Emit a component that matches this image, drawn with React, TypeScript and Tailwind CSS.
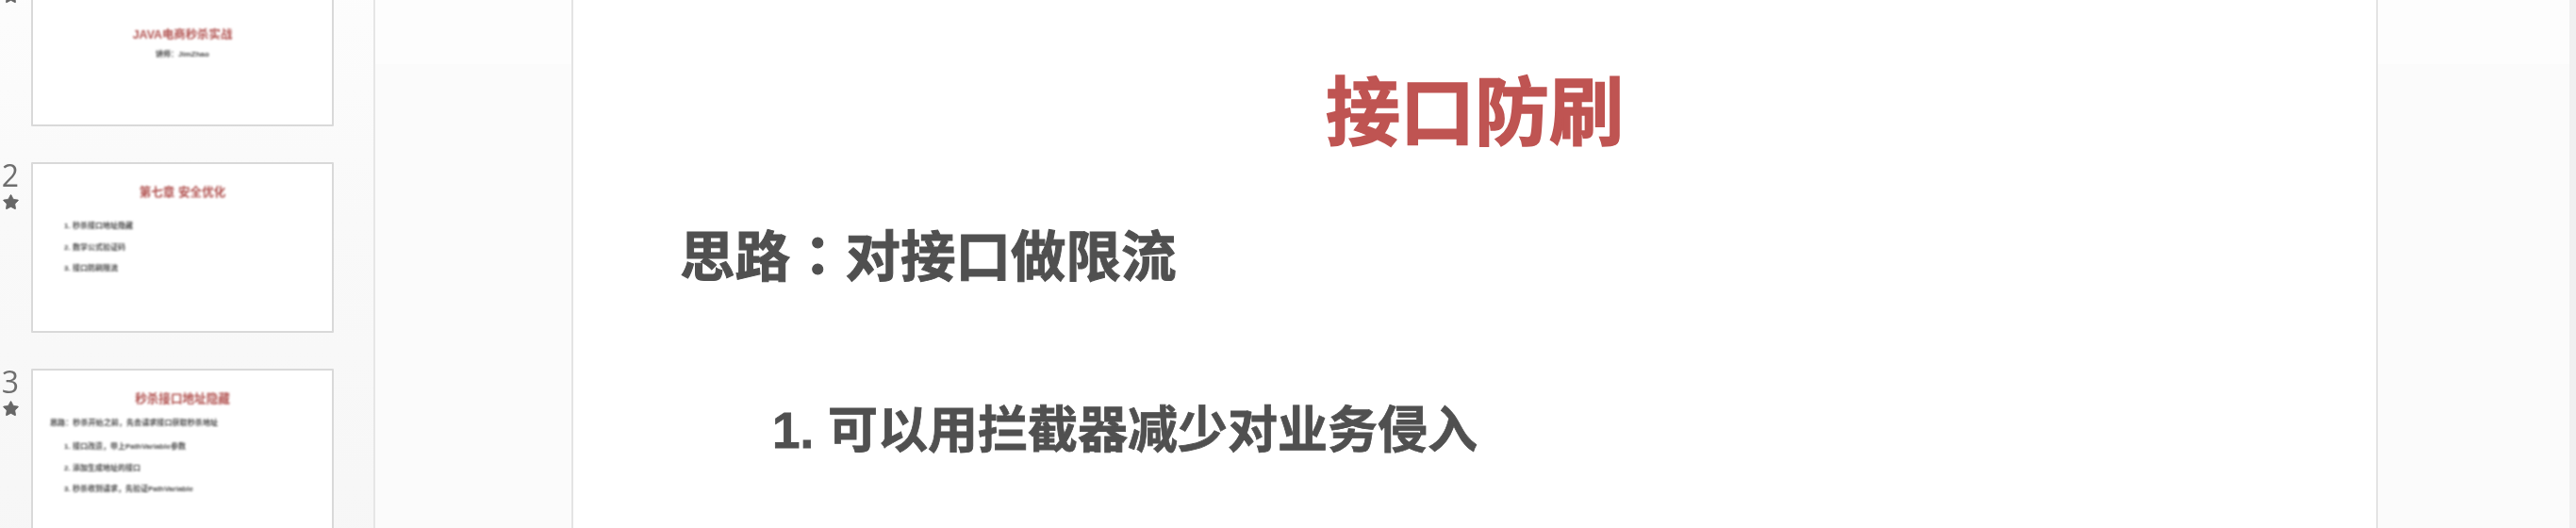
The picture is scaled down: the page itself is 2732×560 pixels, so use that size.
import { Star } from "lucide-react"

const cjk = "font-['Liberation_Sans','Noto_Sans_CJK_SC',sans-serif]"

interface ThumbProps {
  num?: number
  children: React.ReactNode
}

function Thumb({ num, children }: ThumbProps) {
  return (
    <div className="flex h-[181px] shrink-0">
      <div className="flex w-[33px] shrink-0 flex-col items-center pr-[11px]">
        <span className="mt-[-8px] h-[44px] font-['Open_Sans',sans-serif] text-[32px] leading-[44px] text-[#6e6e6e] blur-[0.5px]">
          {num}
        </span>
        <Star className="mt-[-3px] h-[19px] w-[19px] fill-[#666666] text-[#666666] blur-[0.4px]" strokeWidth={1} />
      </div>
      <div className="h-[181px] w-[321px] shrink-0 rounded-[1px] border-2 border-[#d9d9d9] bg-white">
        <div className="blur-[0.9px]">{children}</div>
      </div>
    </div>
  )
}

function ThumbTitle({ children }: { children: React.ReactNode }) {
  return (
    <div className="text-center text-[12.6px] leading-[16px] font-bold text-[#b0504e]">{children}</div>
  )
}

function ThumbItem({ children }: { children: React.ReactNode }) {
  return <div className="ml-[33px] h-[22.5px] text-[8px] leading-[12px] font-bold text-[#484848]">{children}</div>
}

export default function App() {
  return (
    <div className={`flex h-[560px] w-[2732px] overflow-hidden bg-[linear-gradient(#fdfdfd_68px,#fbfbfb_68px)] ${cjk}`}>
      {/* thumbnails */}
      <div className="mt-[-47px] flex h-[700px] w-[398px] shrink-0 flex-col gap-[38px] border-r-2 border-[#e6e6e6] bg-[linear-gradient(#fdfdfd,#f9f9f9_40%,#f6f6f6)]">
        <Thumb>
          <div className="pt-[74px]">
            <div className="text-center text-[12.4px] leading-[16px] font-bold text-[#b0504e]">JAVA电商秒杀实战</div>
            <div className="mt-[7px] text-center text-[8px] leading-[12px] font-bold text-[#484848]">讲师：JimZhao</div>
          </div>
        </Thumb>
        <Thumb num={2}>
          <div className="pt-[22px]">
            <ThumbTitle>第七章 安全优化</ThumbTitle>
            <div className="mt-[22px]">
              <ThumbItem>1. 秒杀接口地址隐藏</ThumbItem>
              <ThumbItem>2. 数学公式验证码</ThumbItem>
              <ThumbItem>3. 接口防刷限流</ThumbItem>
            </div>
          </div>
        </Thumb>
        <Thumb num={3}>
          <div className="pt-[22px]">
            <ThumbTitle>秒杀接口地址隐藏</ThumbTitle>
            <div className="mt-[12px] ml-[18px] h-[25px] text-[8.1px] leading-[12px] font-bold text-[#484848]">
              思路：秒杀开始之前，先去请求接口获取秒杀地址
            </div>
            <ThumbItem>1. 接口改造，带上PathVariable参数</ThumbItem>
            <ThumbItem>2. 添加生成地址的接口</ThumbItem>
            <ThumbItem>3. 秒杀收到请求，先验证PathVariable</ThumbItem>
          </div>
        </Thumb>
      </div>

      {/* slide area */}
      <div className="flex flex-1 justify-center pl-[208px] pr-[203px]">
        <div className="h-full w-full border-x-2 border-[#e4e4e4] bg-white">
          <div className="blur-[0.7px]">
            <h1 className="pt-[75px] text-center text-[79px] leading-[92px] font-bold text-[#bf5452] [-webkit-text-stroke:1.5px_#bf5452]">
              接口防刷
            </h1>
            <p className="mt-[61px] ml-[113px] text-[58.5px] leading-[80px] font-bold text-[#505050] [-webkit-text-stroke:1px_#505050]">
              思路<span className="font-['Noto_Sans_CJK_TC',sans-serif]">：</span>对接口做限流
            </p>
            <p className="mt-[112px] ml-[211px] text-[53px] leading-[64px] font-bold text-[#505050] [-webkit-text-stroke:0.8px_#505050]">
              1. 可以用拦截器减少对业务侵入
            </p>
          </div>
        </div>
      </div>

      {/* window edge */}
      <div className="w-[7px] shrink-0 bg-[#f0f0f0]" />
    </div>
  )
}
